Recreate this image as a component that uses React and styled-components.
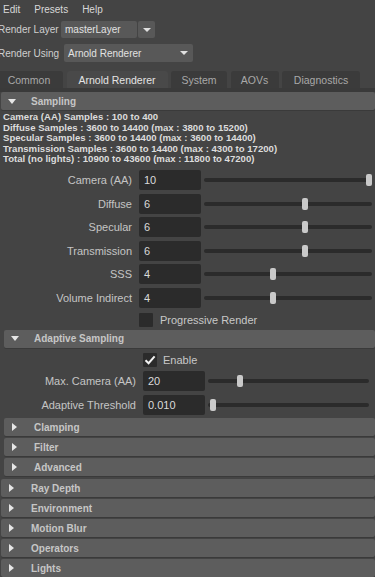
import React from 'react'
import styled, { createGlobalStyle } from 'styled-components'

const GlobalStyle = createGlobalStyle`
html, body {
  margin: 0;
  padding: 0;
  background: #444444;
}
body {
  font-family: "Liberation Sans", Arial, sans-serif;
  color: #c8c8c8;
  overflow: hidden;
}
`

const mainRows = [
  { label: 'Camera (AA)', value: '10', pos: 1 },
  { label: 'Diffuse', value: '6', pos: 0.605 },
  { label: 'Specular', value: '6', pos: 0.605 },
  { label: 'Transmission', value: '6', pos: 0.605 },
  { label: 'SSS', value: '4', pos: 0.41 },
  { label: 'Volume Indirect', value: '4', pos: 0.41 },
]

const adaptiveRows = [
  { label: 'Max. Camera (AA)', value: '20', pos: 0.19 },
  { label: 'Adaptive Threshold', value: '0.010', pos: 0.013 },
]

const info = [
  'Camera (AA) Samples : 100 to 400',
  'Diffuse Samples : 3600 to 14400 (max : 3800 to 15200)',
  'Specular Samples : 3600 to 14400 (max : 3600 to 14400)',
  'Transmission Samples : 3600 to 14400 (max : 4300 to 17200)',
  'Total (no lights) : 10900 to 43600 (max : 11800 to 47200)',
]

function Triangle({ open }) {
  return open ? (
    <svg width="8" height="5" viewBox="0 0 8 5">
      <path d="M0 0 H8 L4 5 Z" fill="#e6e6e6" />
    </svg>
  ) : (
    <svg width="5" height="8" viewBox="0 0 5 8">
      <path d="M0 0 L5 4 L0 8 Z" fill="#e6e6e6" />
    </svg>
  )
}

function DropArrow() {
  return (
    <svg width="8" height="4" viewBox="0 0 8 4">
      <path d="M0 0 H8 L4 4 Z" fill="#e0e0e0" />
    </svg>
  )
}

function FrameHeader({ title, open, sub }) {
  return (
    <Header $sub={sub}>
      <ArrowBox>
        <Triangle open={open} />
      </ArrowBox>
      <HeaderText>{title}</HeaderText>
    </Header>
  )
}

function SliderRow({ label, value, pos }) {
  return (
    <Row>
      <RowLabel>{label}</RowLabel>
      <Field>{value}</Field>
      <Slider>
        <Track />
        <Thumb style={{ left: `calc(${pos} * (100% - 6px))` }} />
      </Slider>
    </Row>
  )
}

function App() {
  return (
    <Page>
      <GlobalStyle />
      <MenuBar>
        <span>Edit</span>
        <span>Presets</span>
        <span>Help</span>
      </MenuBar>

      <SettingRow>
        <SettingLabel $width={59}>Render Layer</SettingLabel>
        <Combo $width={76}>masterLayer</Combo>
        <ComboButton>
          <DropArrow />
        </ComboButton>
      </SettingRow>
      <SettingRow $tall>
        <SettingLabel $width={62}>Render Using</SettingLabel>
        <Combo $width={129}>
          <ComboText>Arnold Renderer</ComboText>
          <DropArrow />
        </Combo>
      </SettingRow>

      <Tabs>
        <Tab $width={68} $first>Common</Tab>
        <Tab $width={101} $active>Arnold Renderer</Tab>
        <Tab $width={56}>System</Tab>
        <Tab $width={48}>AOVs</Tab>
        <Tab $width={78}>Diagnostics</Tab>
      </Tabs>
      <TabBand />

      <Panel>
        <FrameHeader title="Sampling" open />
        <FrameBody>
          <Info>
            {info.map((line) => (
              <div key={line}>{line}</div>
            ))}
          </Info>
          <Rows>
            {mainRows.map((r) => (
              <SliderRow key={r.label} {...r} />
            ))}
          </Rows>
          <CheckRow $gap={7} $top={5}>
            <CheckBox />
            <span>Progressive Render</span>
          </CheckRow>

          <SubFrames>
            <FrameHeader title="Adaptive Sampling" open sub />
            <SubBody>
              <CheckRow $gap={6} $top={3}>
                <CheckBox>
                  <svg width="12" height="10" viewBox="0 0 12 10">
                    <path d="M1.5 5.2 L4.6 8.2 L10.6 1.4" stroke="#f2f2f2" strokeWidth="2" fill="none" />
                  </svg>
                </CheckBox>
                <span>Enable</span>
              </CheckRow>
              <Rows $top={4}>
                {adaptiveRows.map((r) => (
                  <SliderRow key={r.label} {...r} />
                ))}
              </Rows>
            </SubBody>
            <FrameHeader title="Clamping" sub />
            <FrameHeader title="Filter" sub />
            <FrameHeader title="Advanced" sub />
          </SubFrames>
        </FrameBody>

        <Collapsed>
          <FrameHeader title="Ray Depth" />
          <FrameHeader title="Environment" />
          <FrameHeader title="Motion Blur" />
          <FrameHeader title="Operators" />
          <FrameHeader title="Lights" />
        </Collapsed>
      </Panel>
    </Page>
  )
}

const Page = styled.div`
width: 375px;
height: 577px;
overflow: hidden;
background: #444444;
`

const MenuBar = styled.div`
display: flex;
align-items: center;
gap: 14px;
height: 18px;
padding-left: 3px;
font-size: 10px;
color: #d8d8d8;
`

const SettingRow = styled.div`
display: flex;
align-items: center;
gap: 4px;
height: ${(p) => (p.$tall ? 18 : 17)}px;
margin-top: ${(p) => (p.$tall ? 6 : 3)}px;
`

const SettingLabel = styled.span`
flex: none;
width: ${(p) => p.$width}px;
margin-left: -2px;
font-size: 10px;
color: #cfcfcf;
white-space: nowrap;
`

const Combo = styled.div`
display: flex;
align-items: center;
justify-content: space-between;
box-sizing: border-box;
width: ${(p) => p.$width}px;
height: 100%;
padding: 0 5px 0 4px;
background: #585858;
border-radius: 2px;
font-size: 10px;
color: #e2e2e2;
`

const ComboText = styled.span`
white-space: nowrap;
`

const ComboButton = styled.div`
display: flex;
align-items: center;
justify-content: center;
width: 17px;
height: 100%;
margin-left: -3px;
background: #585858;
border-radius: 2px;
`

const Tabs = styled.div`
display: flex;
gap: 3.5px;
height: 17px;
margin-top: 9px;
`

const Tab = styled.div`
display: flex;
align-items: center;
justify-content: center;
flex: none;
width: ${(p) => p.$width}px;
margin-left: ${(p) => (p.$first ? -5 : 0)}px;
background: ${(p) => (p.$active ? '#494949' : '#3b3b3b')};
border-radius: 3px 3px 0 0;
font-size: 10.5px;
color: ${(p) => (p.$active ? '#e4e4e4' : '#a9a9a9')};
white-space: nowrap;
`

const TabBand = styled.div`
height: 4px;
background: #3a3a3a;
`

const Panel = styled.div`
display: flex;
flex-direction: column;
`

const Header = styled.div`
display: flex;
align-items: center;
flex: none;
height: 18px;
margin-left: ${(p) => (p.$sub ? 4 : 1)}px;
background: #5d5d5d;
border-radius: 2px;
box-shadow: 0 1px 0 #3a3a3a;
`

const ArrowBox = styled.div`
display: flex;
align-items: center;
justify-content: center;
width: 9px;
margin-left: 6px;
`

const HeaderText = styled.span`
margin-left: 15px;
font-size: 10px;
font-weight: bold;
color: #c6c6c6;
`

const FrameBody = styled.div`
display: flex;
flex-direction: column;
`

const Info = styled.div`
padding: 2px 0 0 3px;
font-size: 9.6px;
font-weight: bold;
line-height: 10.5px;
color: #dcdcdc;
white-space: nowrap;
`

const Rows = styled.div`
display: flex;
flex-direction: column;
gap: 3.6px;
margin-top: ${(p) => p.$top ?? 5.5}px;
`

const Row = styled.div`
display: flex;
align-items: center;
height: 20px;
`

const RowLabel = styled.span`
flex: none;
width: 132px;
margin-right: 7px;
text-align: right;
font-size: 11px;
color: #c4c4c4;
white-space: nowrap;
`

const Field = styled.div`
display: flex;
align-items: center;
flex: none;
box-sizing: border-box;
width: 62px;
height: 20px;
padding-left: 5px;
background: #2b2b2b;
border-radius: 2px;
font-size: 11px;
color: #dadada;
`

const Slider = styled.div`
position: relative;
flex: 1;
height: 20px;
margin: 0 3px;
`

const Track = styled.div`
position: absolute;
left: 0;
right: 0;
top: 8px;
height: 4px;
background: #2b2b2b;
border-radius: 2px;
`

const Thumb = styled.div`
position: absolute;
top: 4px;
width: 6px;
height: 12px;
background: #c9c9c9;
border-radius: 2px;
`

const CheckRow = styled.div`
display: flex;
align-items: center;
gap: ${(p) => p.$gap}px;
height: 14px;
margin-top: ${(p) => p.$top}px;
padding-left: 139px;
font-size: 11px;
color: #c8c8c8;
`

const CheckBox = styled.div`
display: flex;
align-items: center;
justify-content: center;
width: 14px;
height: 14px;
background: #2b2b2b;
border-radius: 1px;
`

const SubFrames = styled.div`
display: flex;
flex-direction: column;
gap: 2px;
margin-top: 3px;
padding-bottom: 1px;
`

const SubBody = styled.div`
display: flex;
flex-direction: column;
padding: 0 3px 1.5px 4px;
`

const Collapsed = styled.div`
display: flex;
flex-direction: column;
gap: 2px;
margin-top: 2px;
`

export default App
